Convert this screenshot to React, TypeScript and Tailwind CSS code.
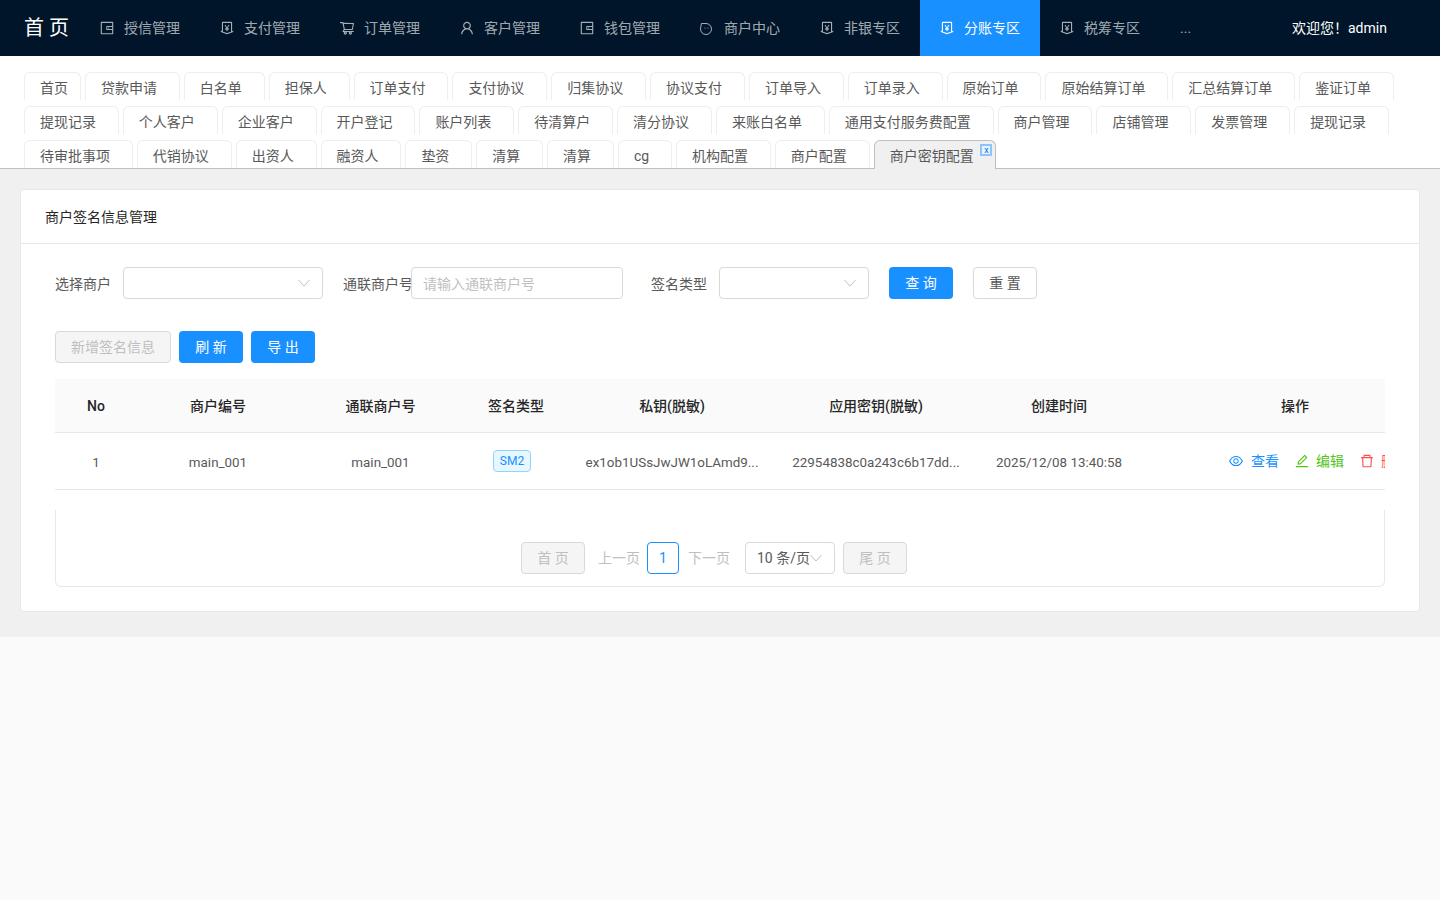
import React from "react";
import {
  AiOutlineWallet,
  AiOutlineMoneyCollect,
  AiOutlineShoppingCart,
  AiOutlineUser,
  AiOutlineEye,
  AiOutlineEdit,
  AiOutlineDelete,
} from "react-icons/ai";

function BubbleIcon({ className }: { className?: string }) {
  return (
    <svg width="16" height="16" viewBox="0 0 16 16" fill="none" className={className}>
      <path
        d="M2.5 3.5 L7 3.5 A5.5 5.5 0 1 1 1.5 9 C1.5 7 2.2 5.5 2.5 3.5 Z"
        stroke="currentColor"
        strokeWidth="1"
        strokeLinejoin="round"
      />
      <circle cx="6" cy="8" r="0.6" fill="currentColor" />
      <circle cx="9" cy="8" r="0.6" fill="currentColor" />
    </svg>
  );
}

const nav = [
  ["授信管理", AiOutlineWallet],
  ["支付管理", AiOutlineMoneyCollect],
  ["订单管理", AiOutlineShoppingCart],
  ["客户管理", AiOutlineUser],
  ["钱包管理", AiOutlineWallet],
  ["商户中心", BubbleIcon],
  ["非银专区", AiOutlineMoneyCollect],
  ["分账专区", AiOutlineMoneyCollect],
  ["税筹专区", AiOutlineMoneyCollect],
] as const;

const tabs = [
  "贷款申请","白名单","担保人","订单支付","支付协议","归集协议","协议支付","订单导入","订单录入","原始订单","原始结算订单","汇总结算订单","鉴证订单",
  "提现记录","个人客户","企业客户","开户登记","账户列表","待清算户","清分协议","来账白名单","通用支付服务费配置","商户管理","店铺管理","发票管理","提现记录",
  "待审批事项","代销协议","出资人","融资人","垫资","清算","清算","cg","机构配置","商户配置",
];

function Chevron() {
  return (
    <svg width="12" height="8" viewBox="0 0 12 8" fill="none" className="shrink-0">
      <path d="M0.5 1 L6 7 L11.5 1" stroke="#bfbfbf" strokeWidth="1" />
    </svg>
  );
}

function Select({ className }: { className: string }) {
  return (
    <div className={"flex h-8 items-center justify-end rounded border border-[#d9d9d9] bg-white pr-3 " + className}>
      <Chevron />
    </div>
  );
}

const th = "h-[53px] border-b border-[#e8e8e8] bg-[#fafafa] pt-[2px] text-center text-sm font-medium text-[#262626]";
const td = "h-[57px] border-b border-[#e8e8e8] pt-[5px] text-center text-[13.4px] text-[#595959]";
const tdPlain = "h-[57px] border-b border-[#e8e8e8] text-center text-[13.4px] text-[#595959]";

export default function App() {
  return (
    <div className="min-h-[900px] bg-[#fafafa] font-['Roboto','Noto_Sans_CJK_SC',sans-serif]">
      <header className="flex h-14 items-center bg-[#001529]">
        <div className="w-20 pl-6 text-[20px] leading-none whitespace-nowrap text-white">首 页</div>
        {nav.map(([label, Icon]) => {
          const active = label === "分账专区";
          return (
            <div
              key={label}
              className={
                "flex h-14 w-[120px] items-center gap-[9px] pl-[19px] text-sm " +
                (active ? "bg-[#1890ff] text-white" : "text-[#ffffffa6]")
              }
            >
              <Icon className="text-[16px]" />
              <span>{label}</span>
            </div>
          );
        })}
        <div className="w-[132px] pl-5 text-sm text-[#ffffffa6]">...</div>
        <div className="text-sm whitespace-nowrap text-white">欢迎您！admin</div>
      </header>

      <div className="border-b border-[#bfbfbf] bg-white px-6 pt-4">
        <div className="flex flex-wrap gap-x-1 gap-y-[6px]">
          <div className="h-7 w-[57px] rounded-t-md border-x border-t border-[#eeeeee] pl-[15px] text-sm leading-[30px] text-[#595959]">首页</div>
          {tabs.map((t, i) => (
            <div
              key={i}
              className="h-7 rounded-t-md border-x border-t border-[#eeeeee] pr-[21.85px] pl-[15px] text-sm leading-[30px] whitespace-nowrap text-[#595959]"
            >
              {t}
            </div>
          ))}
          <div className="relative -mb-px h-[29px] rounded-t-md border-x border-t border-[#bfbfbf] bg-[#f0f0f0] pr-[21.85px] pl-[15px] text-sm leading-[30px] whitespace-nowrap text-[#595959]">
            商户密钥配置
            <span className="absolute top-[3px] right-[3px] flex h-3 w-3 items-center justify-center border-2 border-[#8cc4fb] bg-[#e6f4ff] text-[9px] leading-none text-[#1677d9]">
              x
            </span>
          </div>
        </div>
      </div>

      <main className="bg-[#f0f0f0] px-5 pt-5 pb-[25px]">
        <section className="rounded-sm border border-[#e8e8e8] bg-white">
          <div className="flex h-[54px] items-center border-b border-[#e8e8e8] px-6 text-sm text-[#262626]">商户签名信息管理</div>
          <div className="px-[34px] pt-[23px] pb-6">
            <div className="flex h-8 items-center text-sm text-[#595959]">
              <span className="w-[68px] shrink-0 pt-[2px]">选择商户</span>
              <Select className="w-[200px]" />
              <span className="ml-5 w-[68px] shrink-0 pt-[2px] whitespace-nowrap">通联商户号</span>
              <div className="flex h-8 w-[212px] items-center rounded border border-[#d9d9d9] bg-white pt-[2px] pl-[11px] text-[#bfbfbf]">请输入通联商户号</div>
              <span className="ml-7 w-[68px] shrink-0 pt-[2px]">签名类型</span>
              <Select className="w-[150px]" />
              <button className="ml-5 h-8 w-16 rounded bg-[#1890ff] text-sm text-white">查 询</button>
              <button className="ml-5 h-8 w-16 rounded border border-[#d9d9d9] bg-white text-sm text-[#595959]">重 置</button>
            </div>
            <div className="mt-8 flex gap-2">
              <button className="h-8 w-[116px] rounded border border-[#d9d9d9] bg-[#f5f5f5] text-sm text-[#bfbfbf]">新增签名信息</button>
              <button className="h-8 w-16 rounded bg-[#1890ff] text-sm text-white">刷 新</button>
              <button className="h-8 w-16 rounded bg-[#1890ff] text-sm text-white">导 出</button>
            </div>

            <div className="mt-4 overflow-hidden">
              <table className="w-[1395px] table-fixed border-collapse">
                <colgroup>
                  <col className="w-[82px]" />
                  <col className="w-[162px]" />
                  <col className="w-[163px]" />
                  <col className="w-[108px]" />
                  <col className="w-[204px]" />
                  <col className="w-[204px]" />
                  <col className="w-[162px]" />
                  <col className="w-[310px]" />
                </colgroup>
                <thead>
                  <tr>
                    <th className={th}>No</th>
                    <th className={th}>商户编号</th>
                    <th className={th}>通联商户号</th>
                    <th className={th}>签名类型</th>
                    <th className={th}>私钥(脱敏)</th>
                    <th className={th}>应用密钥(脱敏)</th>
                    <th className={th}>创建时间</th>
                    <th className={th}>操作</th>
                  </tr>
                </thead>
                <tbody>
                  <tr>
                    <td className={td}>1</td>
                    <td className={td}>main_001</td>
                    <td className={td}>main_001</td>
                    <td className={tdPlain}>
                      <span className="mr-2 inline-block h-[22px] rounded border border-[#91d5ff] bg-[#e6f7ff] px-[6px] text-xs leading-5 text-[#1890ff]">SM2</span>
                    </td>
                    <td className={td}>ex1ob1USsJwJW1oLAmd9...</td>
                    <td className={td}>22954838c0a243c6b17dd...</td>
                    <td className={td}>2025/12/08 13:40:58</td>
                    <td className={tdPlain}>
                      <div className="flex items-center gap-[15px] pl-[88px] text-sm whitespace-nowrap">
                        <span className="flex items-center gap-[7px] text-[#1890ff]"><AiOutlineEye className="text-[16px]" />查看</span>
                        <span className="flex items-center gap-[6px] text-[#52c41a]"><AiOutlineEdit className="text-[16px]" />编辑</span>
                        <span className="flex items-center gap-[6px] text-[#ff4d4f]"><AiOutlineDelete className="text-[16px]" />删除</span>
                      </div>
                    </td>
                  </tr>
                </tbody>
              </table>
            </div>

            <div className="mt-5 flex h-[77px] items-start justify-center rounded-b-md border-x border-b border-[#e8e8e8] pt-8 pr-3 text-sm">
              <button className="h-8 w-16 rounded border border-[#d9d9d9] bg-[#f5f5f5] text-[#bfbfbf]">首 页</button>
              <span className="ml-[13px] leading-8 text-[#bfbfbf]">上一页</span>
              <span className="ml-[7px] h-8 w-8 rounded border border-[#1890ff] text-center leading-[30px] text-[#1890ff]">1</span>
              <span className="ml-[9px] leading-8 text-[#bfbfbf]">下一页</span>
              <div className="ml-[15px] flex h-8 w-[90px] items-center rounded border border-[#d9d9d9] pl-[11px] text-[#595959]">
                <span className="whitespace-nowrap">10 条/页</span>
                <Chevron />
              </div>
              <button className="ml-2 h-8 w-16 rounded border border-[#d9d9d9] bg-[#f5f5f5] text-[#bfbfbf]">尾 页</button>
            </div>
          </div>
        </section>
      </main>
    </div>
  );
}
